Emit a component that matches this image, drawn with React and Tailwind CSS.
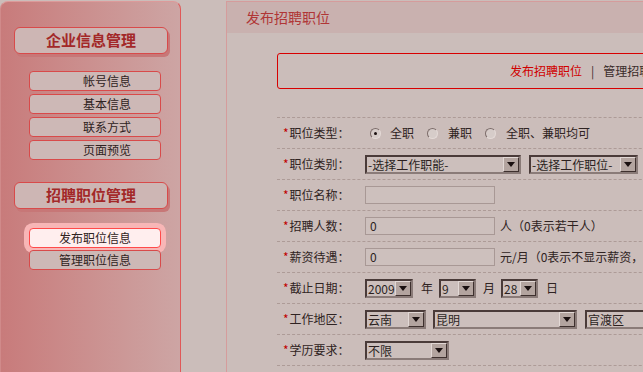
import React from "react";

const font = { fontFamily: '"Noto Sans CJK SC", "Noto Sans", sans-serif' };

function Arrow() {
  return (
    <div className="h-full w-[16px] shrink-0 bg-[#b3a49f] border border-t-[#e2d8d5] border-l-[#e2d8d5] border-r-[#3e302e] border-b-[#3e302e] flex items-center justify-center">
      <svg width="8" height="5" viewBox="0 0 8 5">
        <path d="M0 0 H8 L4 5 Z" fill="#1a1010" />
      </svg>
    </div>
  );
}

function Select({ w, text }) {
  return (
    <div
      className="h-[19px] shrink-0 flex border-2 border-t-[#4a3b39] border-l-[#4a3b39] border-r-[#8a7b78] border-b-[#8a7b78] bg-[#ccbfbc]"
      style={{ width: w }}
    >
      <div className="flex-1 min-w-0 overflow-hidden whitespace-nowrap text-[12px] leading-[15px] pl-[1px] text-[#2b1f1e]">
        {text}
      </div>
      <Arrow />
    </div>
  );
}

function Input({ value }) {
  return (
    <div className="w-[130px] h-[18px] shrink-0 border border-[#a89895] bg-[#cdc0bd] text-[12px] leading-[16px] pl-[4px] text-[#2b1f1e]">
      {value}
    </div>
  );
}

function Radio({ checked }) {
  return (
    <div className="w-[11px] h-[11px] rounded-full border border-t-[#7c6c6a] border-l-[#7c6c6a] border-r-[#e4dad7] border-b-[#e4dad7] bg-[#d6ccc9] flex items-center justify-center shrink-0">
      {checked && <div className="w-[3px] h-[3px] rounded-full bg-[#1a1010]" />}
    </div>
  );
}

function Row({ label, children }) {
  return (
    <div className="h-[31px] border-b border-dashed border-[#ad9b97] flex items-center text-[12px] text-[#2f2322]">
      <div className="w-[88px] shrink-0 flex items-center pl-[6px]">
        {label && <span className="text-[#c00000] text-[12px] mr-[1px]">*</span>}
        <span>{label}</span>
      </div>
      <div className="flex items-center whitespace-nowrap">{children}</div>
    </div>
  );
}

function SectionHead({ text }) {
  return (
    <div className="ml-[13px] w-[154px] h-[27px] rounded-[6px] border border-[#d84a4a] bg-[#cdb6b4] shadow-[2px_3px_0_#c77777] flex items-center justify-center text-[15px] font-bold text-[#a32828]">
      {text}
    </div>
  );
}

function Item({ text, active, className = "" }) {
  return (
    <div
      className={
        "relative ml-[28px] w-[132px] h-[20px] rounded-[4px] border flex items-center justify-end pr-[29px] text-[12px] text-[#2f2322] " +
        (active
          ? "border-[#ff4a4a] bg-[#ffeeee] shadow-[0_0_0_5px_#f8b6b6] "
          : "border-[#d84a4a] bg-[#cdb8b6] ") +
        className
      }
    >
      {text}
    </div>
  );
}

export default function App() {
  return (
    <div className="w-[643px] h-[372px] overflow-hidden bg-[#cbbdba] flex" style={font}>
      {/* Sidebar */}
      <div className="w-[181px] h-[371px] mt-[1px] shrink-0 rounded-t-[8px] border-l border-t border-r border-l-[#d08a8a] border-t-[#dc9a9a] border-r-[#e05858] bg-gradient-to-r from-[#c87b7b] to-[#cda5a4] pt-[25px]">
        <SectionHead text="企业信息管理" />
        <div className="mt-[17px] flex flex-col gap-[3px]">
          <Item text="帐号信息" />
          <Item text="基本信息" />
          <Item text="联系方式" />
          <Item text="页面预览" />
        </div>
        <div className="mt-[22px]">
          <SectionHead text="招聘职位管理" />
        </div>
        <div className="mt-[19px] flex flex-col gap-[2px]">
          <Item text="发布职位信息" active />
          <Item text="管理职位信息" className="z-10" />
        </div>
      </div>

      <div className="w-[45px] shrink-0" />

      {/* Main panel */}
      <div className="flex-1 min-w-0 mt-[1px] border-l border-t border-[#d59c9c] overflow-hidden">
        <div className="h-[31px] bg-[#c9b1af] pl-[19px] flex items-center text-[14px] text-[#b03636]">
          发布招聘职位
        </div>
        <div className="pl-[50px] pt-[20px]">
          <div className="w-[420px] h-[36px] rounded-[3px] border border-[#d80000] flex items-center pl-[232px] text-[12px] whitespace-nowrap">
            <span className="text-[#d00000]">发布招聘职位</span>
            <span className="text-[#3a2c2b] mx-[9px]">|</span>
            <span className="text-[#3a2c2b]">管理招聘职位</span>
          </div>

          <div className="mt-[28px] w-[420px] border-t border-dashed border-[#ad9b97]">
            <Row label="职位类型：">
              <div className="ml-[5px]"><Radio checked /></div>
              <span className="ml-[9px]">全职</span>
              <div className="ml-[13px]"><Radio /></div>
              <span className="ml-[10px]">兼职</span>
              <div className="ml-[13px]"><Radio /></div>
              <span className="ml-[10px]">全职、兼职均可</span>
            </Row>
            <Row label="职位类别：">
              <Select w={156} text="-选择工作职能-" />
              <div className="ml-[8px]"><Select w={109} text="-选择工作职位-" /></div>
            </Row>
            <Row label="职位名称：">
              <Input value="" />
            </Row>
            <Row label="招聘人数：">
              <Input value="0" />
              <span className="ml-[5px]">人（0表示若干人）</span>
            </Row>
            <Row label="薪资待遇：">
              <Input value="0" />
              <span className="ml-[5px]">元/月（0表示不显示薪资，</span>
            </Row>
            <Row label="截止日期：">
              <Select w={48} text="2009" />
              <span className="ml-[8px]">年</span>
              <div className="ml-[6px]"><Select w={37} text="9" /></div>
              <span className="ml-[7px]">月</span>
              <div className="ml-[6px]"><Select w={37} text="28" /></div>
              <span className="ml-[8px]">日</span>
            </Row>
            <Row label="工作地区：">
              <Select w={61} text="云南" />
              <div className="ml-[7px]"><Select w={144} text="昆明" /></div>
              <div className="ml-[8px]"><Select w={90} text="官渡区" /></div>
            </Row>
            <Row label="学历要求：">
              <Select w={84} text="不限" />
            </Row>
            <Row label="">
              <Select w={84} text="" />
            </Row>
          </div>
        </div>
      </div>
    </div>
  );
}
